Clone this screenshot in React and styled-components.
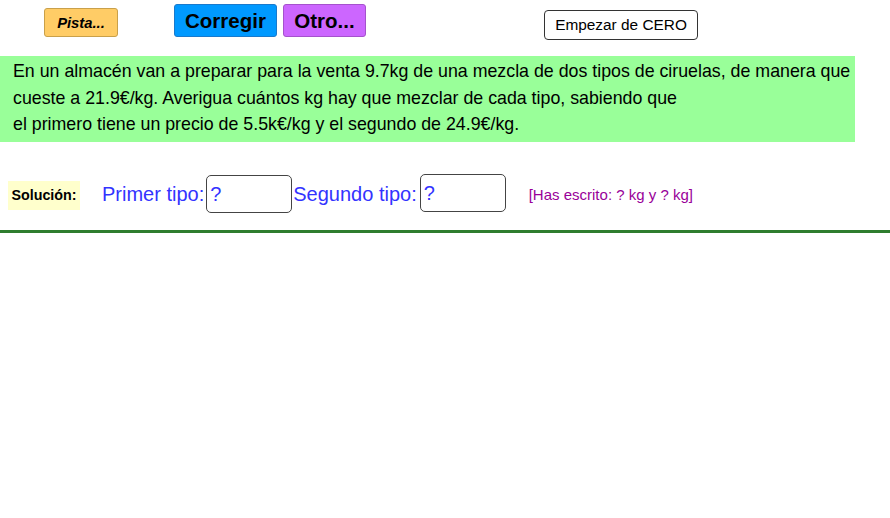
import React from "react";
import styled, { createGlobalStyle } from "styled-components";

const Global = createGlobalStyle`
  html, body { margin: 0; padding: 0; background: #ffffff; }
  body { font-family: "Liberation Sans", Arial, sans-serif; }
`;

const Page = styled.div`
  width: 890px;
  height: 518px;
  background: #fff;
  display: flex;
  flex-direction: column;
`;

const Toolbar = styled.div`
  height: 56px;
  display: flex;
  align-items: flex-start;
`;

const Btn = styled.button`
  box-sizing: border-box;
  margin-left: ${(p) => p.$ml}px;
  margin-top: ${(p) => p.$mt}px;
  width: ${(p) => p.$w}px;
  height: ${(p) => p.$h}px;
  background: ${(p) => p.$bg};
  border: 1px solid ${(p) => p.$bd};
  border-radius: ${(p) => p.$r || 3}px;
  font-family: "Liberation Sans", Arial, sans-serif;
  font-size: ${(p) => p.$fs}px;
  font-weight: ${(p) => (p.$bold ? 700 : 400)};
  font-style: ${(p) => (p.$italic ? "italic" : "normal")};
  color: #000;
  padding: 0;
  display: flex;
  align-items: center;
  justify-content: center;
  cursor: pointer;
`;

const Statement = styled.div`
  box-sizing: border-box;
  width: 855px;
  height: 86px;
  background: #99ff99;
  padding: 2px 0 0 13px;
  font-size: 17.8px;
  line-height: 26.5px;
  color: #000;
  white-space: nowrap;
`;

const SolutionRow = styled.div`
  margin-top: 31px;
  height: 40px;
  display: flex;
  align-items: center;
`;

const SolLabel = styled.div`
  box-sizing: border-box;
  margin-left: 8px;
  width: 72px;
  height: 29px;
  background: #ffffcc;
  font-size: 14.3px;
  font-weight: 700;
  color: #000;
  display: flex;
  align-items: center;
  justify-content: center;
  margin-top: 4px;
`;

const FieldLabel = styled.span`
  margin-left: ${(p) => p.$ml || 0}px;
  font-size: 20px;
  color: #3333ff;
  margin-top: 3px;
`;

const Field = styled.div`
  box-sizing: border-box;
  margin-left: ${(p) => p.$ml || 2}px;
  width: 86px;
  height: 38px;
  border: 1.5px solid #444;
  border-radius: 5px;
  background: #fff;
  font-size: 20px;
  color: #3333ff;
  display: flex;
  align-items: center;
  padding-left: 3px;
  margin-top: ${(p) => p.$mt || 0}px;
`;

const Echo = styled.span`
  margin-left: 23px;
  font-size: 15px;
  color: #990099;
  margin-top: 2px;
`;

const Rule = styled.div`
  margin-top: 17px;
  height: 2.5px;
  background: #2e7d2e;
  width: 890px;
`;

export default function App() {
  return (
    <Page>
      <Global />
      <Toolbar>
        <Btn $ml={44} $mt={8} $w={74} $h={29} $bg="#ffcc66" $bd="#c9a04a" $fs={14.8} $bold $italic>
          Pista...
        </Btn>
        <Btn $ml={56} $mt={4} $w={103} $h={33} $bg="#0099ff" $bd="#1a7acc" $fs={20.5} $bold>
          Corregir
        </Btn>
        <Btn $ml={6} $mt={4} $w={83} $h={33} $bg="#cc66ff" $bd="#a552cc" $fs={20.5} $bold>
          Otro...
        </Btn>
        <Btn $ml={178} $mt={10} $w={154} $h={30} $bg="#ffffff" $bd="#333" $r={4} $fs={15.4}>
          Empezar de CERO
        </Btn>
      </Toolbar>
      <Statement>
        En un almacén van a preparar para la venta 9.7kg de una mezcla de dos tipos de ciruelas, de manera que
        <br />
        cueste a 21.9€/kg. Averigua cuántos kg hay que mezclar de cada tipo, sabiendo que
        <br />
        el primero tiene un precio de 5.5k€/kg y el segundo de 24.9€/kg.
      </Statement>
      <SolutionRow>
        <SolLabel>Solución:</SolLabel>
        <FieldLabel $ml={22}>Primer tipo:</FieldLabel>
        <Field $mt={2} $ml={2}>?</Field>
        <FieldLabel $ml={1}>Segundo tipo:</FieldLabel>
        <Field $ml={3}>?</Field>
        <Echo>[Has escrito: ? kg y ? kg]</Echo>
      </SolutionRow>
      <Rule />
    </Page>
  );
}
